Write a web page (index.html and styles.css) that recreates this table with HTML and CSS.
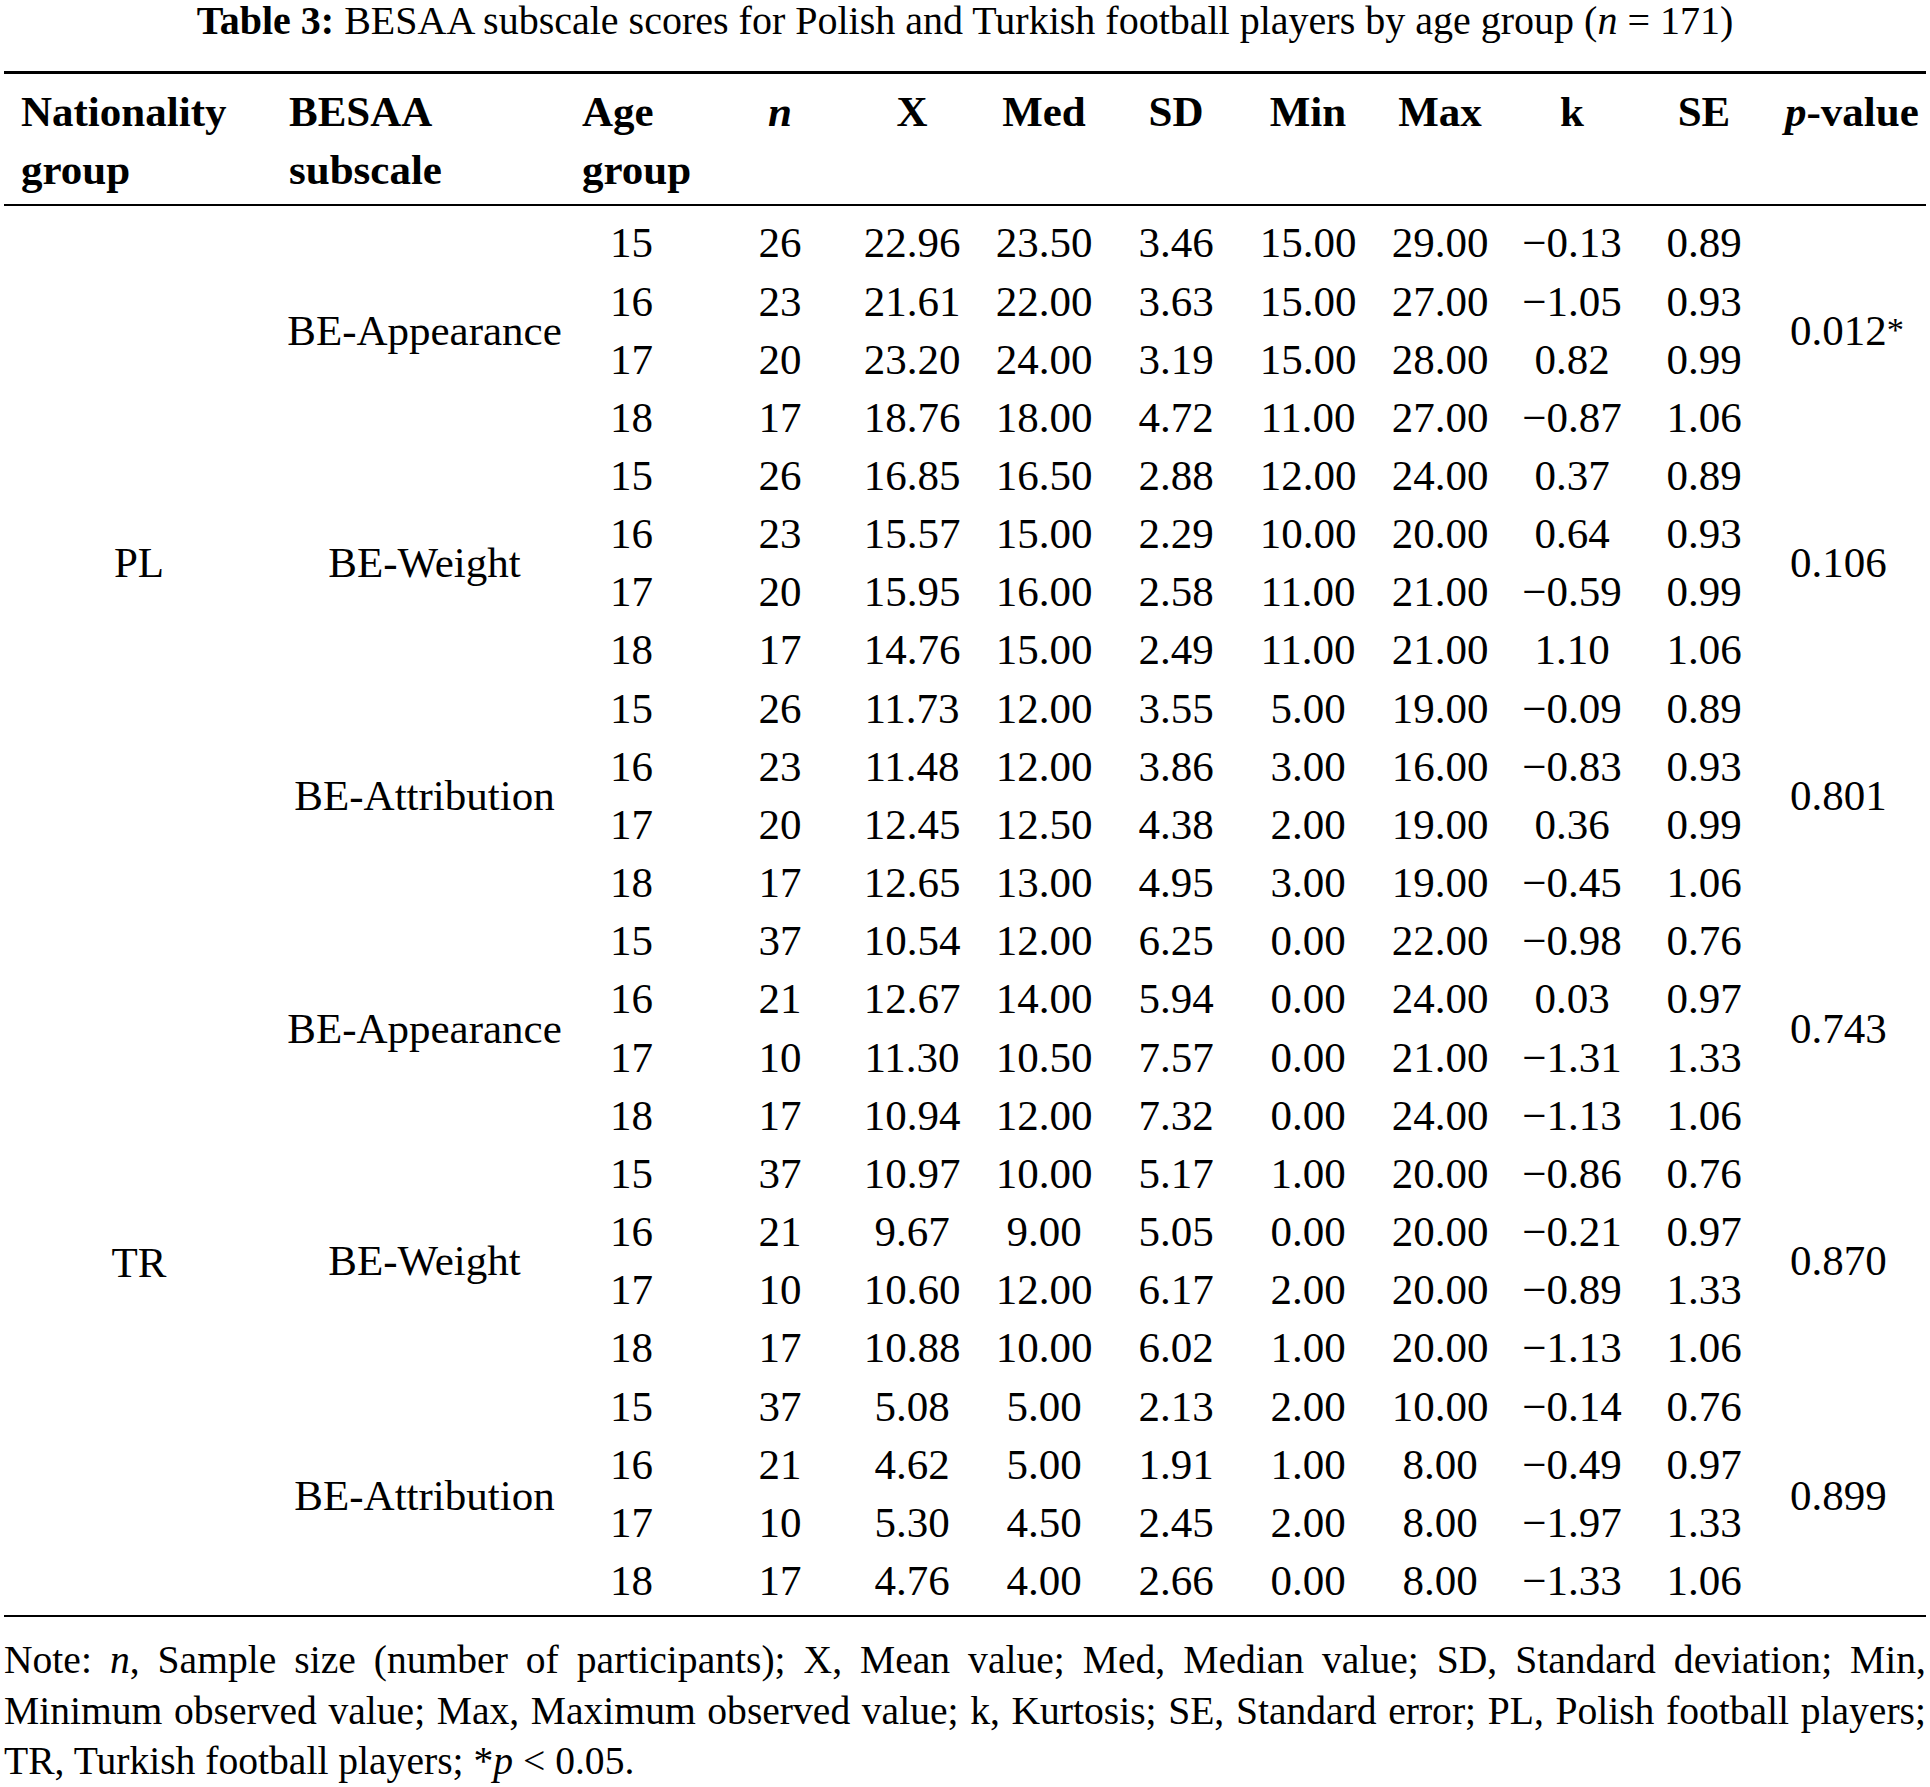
FILE: index.html
```html
<!DOCTYPE html>
<html lang="en">
<head>
<meta charset="utf-8">
<title>Table 3</title>
<link rel="stylesheet" href="styles.css">
</head>
<body>
<div class="page">
  <h1 class="caption"><b>Table 3:</b> BESAA subscale scores for Polish and Turkish football players by age group (<i>n</i> = 171)</h1>
  <table class="scores">
    <colgroup>
      <col class="c-nat"><col class="c-sub"><col class="c-age">
      <col class="c-num"><col class="c-num"><col class="c-num"><col class="c-num">
      <col class="c-num"><col class="c-num"><col class="c-num"><col class="c-num">
      <col class="c-p">
    </colgroup>
    <thead>
      <tr>
        <th class="l nat">Nationality<br>group</th>
        <th class="l">BESAA<br>subscale</th>
        <th class="l">Age<br>group</th>
        <th><i>n</i></th>
        <th>X</th>
        <th>Med</th>
        <th>SD</th>
        <th>Min</th>
        <th>Max</th>
        <th>k</th>
        <th>SE</th>
        <th class="l"><i>p</i>-value</th>
      </tr>
    </thead>
    <tbody>
      <tr><td rowspan="12">PL</td><td rowspan="4" class="sub">BE-Appearance</td><td class="age">15</td><td>26</td><td>22.96</td><td>23.50</td><td>3.46</td><td>15.00</td><td>29.00</td><td>−0.13</td><td>0.89</td><td rowspan="4" class="pv">0.012<span class="star">*</span></td></tr>
      <tr><td class="age">16</td><td>23</td><td>21.61</td><td>22.00</td><td>3.63</td><td>15.00</td><td>27.00</td><td>−1.05</td><td>0.93</td></tr>
      <tr><td class="age">17</td><td>20</td><td>23.20</td><td>24.00</td><td>3.19</td><td>15.00</td><td>28.00</td><td>0.82</td><td>0.99</td></tr>
      <tr><td class="age">18</td><td>17</td><td>18.76</td><td>18.00</td><td>4.72</td><td>11.00</td><td>27.00</td><td>−0.87</td><td>1.06</td></tr>
      <tr><td rowspan="4" class="sub">BE-Weight</td><td class="age">15</td><td>26</td><td>16.85</td><td>16.50</td><td>2.88</td><td>12.00</td><td>24.00</td><td>0.37</td><td>0.89</td><td rowspan="4" class="pv">0.106</td></tr>
      <tr><td class="age">16</td><td>23</td><td>15.57</td><td>15.00</td><td>2.29</td><td>10.00</td><td>20.00</td><td>0.64</td><td>0.93</td></tr>
      <tr><td class="age">17</td><td>20</td><td>15.95</td><td>16.00</td><td>2.58</td><td>11.00</td><td>21.00</td><td>−0.59</td><td>0.99</td></tr>
      <tr><td class="age">18</td><td>17</td><td>14.76</td><td>15.00</td><td>2.49</td><td>11.00</td><td>21.00</td><td>1.10</td><td>1.06</td></tr>
      <tr><td rowspan="4" class="sub">BE-Attribution</td><td class="age">15</td><td>26</td><td>11.73</td><td>12.00</td><td>3.55</td><td>5.00</td><td>19.00</td><td>−0.09</td><td>0.89</td><td rowspan="4" class="pv">0.801</td></tr>
      <tr><td class="age">16</td><td>23</td><td>11.48</td><td>12.00</td><td>3.86</td><td>3.00</td><td>16.00</td><td>−0.83</td><td>0.93</td></tr>
      <tr><td class="age">17</td><td>20</td><td>12.45</td><td>12.50</td><td>4.38</td><td>2.00</td><td>19.00</td><td>0.36</td><td>0.99</td></tr>
      <tr><td class="age">18</td><td>17</td><td>12.65</td><td>13.00</td><td>4.95</td><td>3.00</td><td>19.00</td><td>−0.45</td><td>1.06</td></tr>
      <tr><td rowspan="12">TR</td><td rowspan="4" class="sub">BE-Appearance</td><td class="age">15</td><td>37</td><td>10.54</td><td>12.00</td><td>6.25</td><td>0.00</td><td>22.00</td><td>−0.98</td><td>0.76</td><td rowspan="4" class="pv">0.743</td></tr>
      <tr><td class="age">16</td><td>21</td><td>12.67</td><td>14.00</td><td>5.94</td><td>0.00</td><td>24.00</td><td>0.03</td><td>0.97</td></tr>
      <tr><td class="age">17</td><td>10</td><td>11.30</td><td>10.50</td><td>7.57</td><td>0.00</td><td>21.00</td><td>−1.31</td><td>1.33</td></tr>
      <tr><td class="age">18</td><td>17</td><td>10.94</td><td>12.00</td><td>7.32</td><td>0.00</td><td>24.00</td><td>−1.13</td><td>1.06</td></tr>
      <tr><td rowspan="4" class="sub">BE-Weight</td><td class="age">15</td><td>37</td><td>10.97</td><td>10.00</td><td>5.17</td><td>1.00</td><td>20.00</td><td>−0.86</td><td>0.76</td><td rowspan="4" class="pv">0.870</td></tr>
      <tr><td class="age">16</td><td>21</td><td>9.67</td><td>9.00</td><td>5.05</td><td>0.00</td><td>20.00</td><td>−0.21</td><td>0.97</td></tr>
      <tr><td class="age">17</td><td>10</td><td>10.60</td><td>12.00</td><td>6.17</td><td>2.00</td><td>20.00</td><td>−0.89</td><td>1.33</td></tr>
      <tr><td class="age">18</td><td>17</td><td>10.88</td><td>10.00</td><td>6.02</td><td>1.00</td><td>20.00</td><td>−1.13</td><td>1.06</td></tr>
      <tr><td rowspan="4" class="sub">BE-Attribution</td><td class="age">15</td><td>37</td><td>5.08</td><td>5.00</td><td>2.13</td><td>2.00</td><td>10.00</td><td>−0.14</td><td>0.76</td><td rowspan="4" class="pv">0.899</td></tr>
      <tr><td class="age">16</td><td>21</td><td>4.62</td><td>5.00</td><td>1.91</td><td>1.00</td><td>8.00</td><td>−0.49</td><td>0.97</td></tr>
      <tr><td class="age">17</td><td>10</td><td>5.30</td><td>4.50</td><td>2.45</td><td>2.00</td><td>8.00</td><td>−1.97</td><td>1.33</td></tr>
      <tr><td class="age">18</td><td>17</td><td>4.76</td><td>4.00</td><td>2.66</td><td>0.00</td><td>8.00</td><td>−1.33</td><td>1.06</td></tr>
    </tbody>
  </table>
  <p class="note">
    <span class="jl">Note: <i>n</i>, Sample size (number of participants); X, Mean value; Med, Median value; SD, Standard deviation; Min,</span>
    <span class="jl">Minimum observed value; Max, Maximum observed value; k, Kurtosis; SE, Standard error; PL, Polish football players;</span>
    <span class="last">TR, Turkish football players; *<i>p</i> &lt; 0.05.</span>
  </p>
</div>
</body>
</html>
```

FILE: styles.css
```css
html, body {
  margin: 0;
  padding: 0;
  background: #ffffff;
}

body {
  color: #000000;
  font-family: "Liberation Serif", "Times New Roman", serif;
}

.page {
  width: 1922px;
  margin-left: 4px;
}

.caption {
  margin: 0;
  font-size: 40px;
  line-height: 42px;
  font-weight: normal;
  text-align: center;
}

.caption b {
  font-weight: bold;
}

.scores {
  margin-top: 29px;
  width: 1922px;
  table-layout: fixed;
  border-collapse: separate;
  border-spacing: 0;
  border-top: 3px solid #000;
  border-bottom: 2.5px solid #000;
  font-size: 43px;
}

.c-nat { width: 270px; }
.c-sub { width: 293px; }
.c-age { width: 147px; }
.c-num { width: 132px; }
.c-p   { width: 156px; }

.scores th {
  font-weight: bold;
  line-height: 58px;
  padding: 9px 0 5px 0;
  vertical-align: top;
  text-align: center;
  white-space: nowrap;
  border-bottom: 2px solid #000;
}

.scores th.l {
  text-align: left;
  padding-left: 15px;
}

.scores th.nat {
  padding-left: 17px;
}

.scores td {
  padding: 0;
  line-height: 58.15px;
  text-align: center;
  vertical-align: middle;
  white-space: nowrap;
}

.scores td.sub {
  padding-left: 8px;
}

.scores td.age {
  text-align: left;
  padding-left: 43px;
}

.scores td.pv {
  text-align: left;
  padding-left: 20px;
}

.scores td.pv .star {
  font-size: 0.8em;
  vertical-align: 0.12em;
  line-height: 1;
}

.scores tbody tr:first-child > td {
  padding-top: 8.4px;
}

.scores tbody tr:last-child > td {
  padding-bottom: 4.5px;
}

.note {
  margin: 18.5px 0 0 0;
  font-size: 39.6px;
  line-height: 50.5px;
}

.note .jl {
  display: block;
  text-align: justify;
  text-align-last: justify;
}

.note .last {
  display: block;
  text-align: left;
}
```
